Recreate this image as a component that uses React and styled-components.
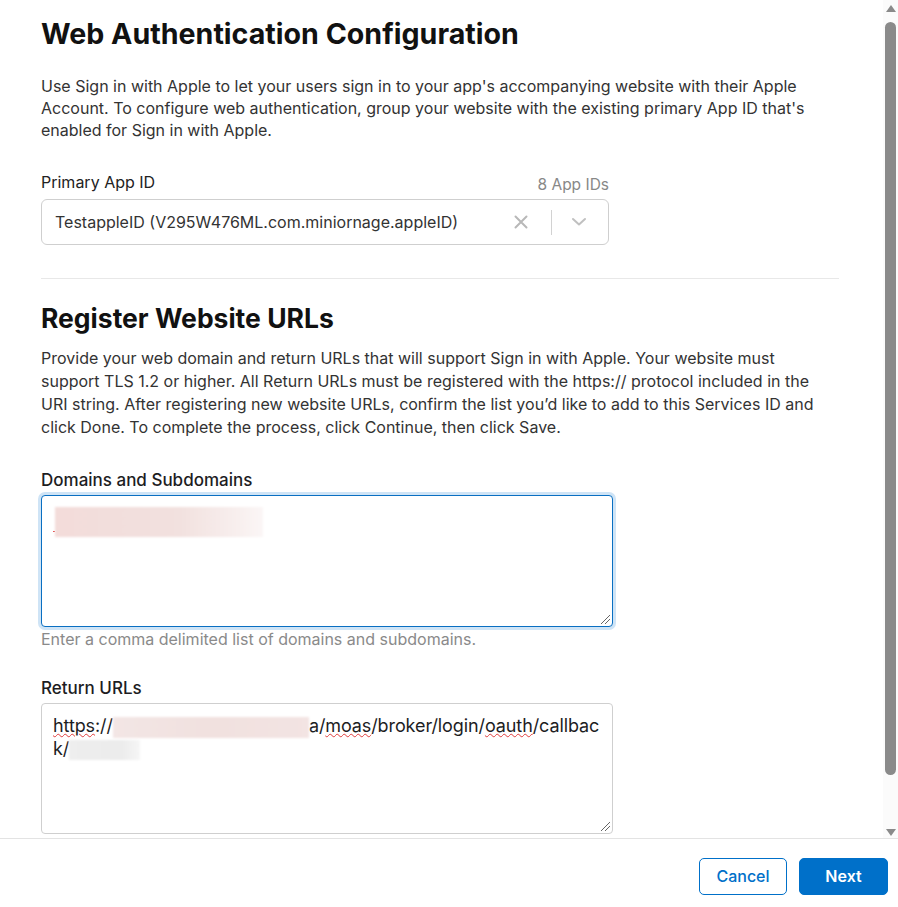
import styled, { createGlobalStyle } from "styled-components"

const GlobalStyle = createGlobalStyle`
    html, body {
        margin: 0;
        padding: 0;
        background: #fff;
    }
    body {
        font-family: Inter, "Noto Sans", "Liberation Sans", sans-serif;
        color: #1d1d1f;
        -webkit-font-smoothing: antialiased;
    }
`

export default function App() {
    return (
        <Page>
            <GlobalStyle />
            <Viewport>
                <Scroller>
                    <Content>
                        <Title>Web Authentication Configuration</Title>
                        <Text>
                            Use Sign in with Apple to let your users sign in to your app's accompanying website with their Apple<br />
                            Account. To configure web authentication, group your website with the existing primary App ID that's<br />
                            enabled for Sign in with Apple.
                        </Text>

                        <LabelRow>
                            <Label>Primary App ID</Label>
                            <Count>8 App IDs</Count>
                        </LabelRow>
                        <Select>
                            <SelectValue>TestappleID (V295W476ML.com.miniornage.appleID)</SelectValue>
                            <SelectIcon>
                                <svg width="14" height="14" viewBox="0 0 14 14">
                                    <path d="M1.5 1.5 L12.5 12.5 M12.5 1.5 L1.5 12.5" stroke="#b8b8b8" strokeWidth="2" strokeLinecap="round" />
                                </svg>
                            </SelectIcon>
                            <SelectSep />
                            <SelectIcon>
                                <svg width="16" height="10" viewBox="0 0 16 10">
                                    <path d="M2 2 L8 7.5 L14 2" stroke="#c0c0c0" strokeWidth="2" fill="none" strokeLinecap="round" strokeLinejoin="round" />
                                </svg>
                            </SelectIcon>
                        </Select>

                        <Divider />

                        <Heading>Register Website URLs</Heading>
                        <Text $lh={23}>
                            Provide your web domain and return URLs that will support Sign in with Apple. Your website must<br />
                            support TLS 1.2 or higher. All Return URLs must be registered with the https:// protocol included in the<br />
                            URI string. After registering new website URLs, confirm the list you’d like to add to this Services ID and<br />
                            click Done. To complete the process, click Continue, then click Save.
                        </Text>

                        <FieldLabel>Domains and Subdomains</FieldLabel>
                        <Area $focused $height={132} $width={572}>
                            <Line>
                                <Dot />
                                <Blur $w={208} $h={30} $fade />
                            </Line>
                            <Grip />
                        </Area>
                        <Hint>Enter a comma delimited list of domains and subdomains.</Hint>

                        <FieldLabel $top={29}>Return URLs</FieldLabel>
                        <Area $height={131} $width={572}>
                            <UrlText>
                                <Typo>https</Typo>://<Blur $w={196} $h={21} />a/<Typo>moas</Typo>/broker/login/<Typo>oauth</Typo>/callbac<br />
                                k/<Blur $w={71} $h={20} $grey />
                            </UrlText>
                            <Grip />
                        </Area>
                        <Spacer />
                    </Content>
                </Scroller>
                <Scrollbar>
                    <Arrow />
                    <Thumb />
                    <Arrow $down />
                </Scrollbar>
            </Viewport>
            <Footer>
                <Button>Cancel</Button>
                <Button $primary>Next</Button>
            </Footer>
        </Page>
    )
}

const Page = styled.div`
    width: 898px;
    height: 907px;
    display: flex;
    flex-direction: column;
    overflow: hidden;
`

const Viewport = styled.div`
    flex: none;
    height: 838px;
    display: flex;
    border-bottom: 1px solid #e3e3e3;
`

const Scroller = styled.div`
    flex: 1;
    overflow: hidden;
`

const Content = styled.div`
    padding: 17px 44px 0 41px;
    display: flex;
    flex-direction: column;
    align-items: flex-start;
`

const Title = styled.h1`
    margin: 0;
    font-size: 28.6px;
    line-height: 34px;
    font-weight: 700;
    color: #111;
`

const Heading = styled.h2`
    margin: 24px 0 0;
    font-size: 26.5px;
    line-height: 30px;
    font-weight: 700;
    color: #111;
`

const Text = styled.p`
    margin: ${p => p.$lh ? '14px' : '24px'} 0 0;
    font-size: 16px;
    line-height: ${p => p.$lh || 22}px;
    color: #333;
    white-space: nowrap;
`

const LabelRow = styled.div`
    margin-top: 31px;
    width: 568px;
    display: flex;
    justify-content: space-between;
    align-items: baseline;
`

const Label = styled.span`
    font-size: 16px;
    line-height: 20px;
    color: #222;
`

const Count = styled.span`
    font-size: 15.5px;
    line-height: 20px;
    color: #888;
    position: relative;
    top: 2px;
`

const Select = styled.div`
    margin-top: 6px;
    box-sizing: border-box;
    width: 568px;
    height: 46px;
    border: 1px solid #cfcfcf;
    border-radius: 6px;
    display: flex;
    align-items: center;
    padding: 0 18px 0 13px;
`

const SelectValue = styled.span`
    flex: 1;
    font-size: 16px;
    color: #333;
    white-space: nowrap;
`

const SelectIcon = styled.span`
    display: flex;
    align-items: center;
    justify-content: center;
    width: 22px;
`

const SelectSep = styled.span`
    width: 1px;
    height: 25px;
    background: #d2d2d2;
    margin: 0 16px 0 19px;
`

const Divider = styled.hr`
    margin: 33px 0 0;
    width: 798px;
    border: none;
    border-top: 1px solid #e8e8e8;
`

const FieldLabel = styled.label`
    margin-top: ${p => p.$top || 31}px;
    font-size: 17px;
    line-height: 20px;
    font-weight: 500;
    color: #1d1d1f;
`

const Area = styled.div`
    position: relative;
    margin-top: 5px;
    box-sizing: border-box;
    width: ${p => p.$width}px;
    height: ${p => p.$height}px;
    border: 1px solid ${p => p.$focused ? '#0a6fc2' : '#cfcfcf'};
    border-radius: 4px;
    box-shadow: ${p => p.$focused ? '0 0 0 3px #cfe4f6' : 'none'};
    padding: 11px 11px;
    background: #fff;
`

const Line = styled.div`
    display: flex;
    align-items: center;
`

const Dot = styled.span`
    width: 2px;
    height: 1px;
    background: #e24a4a;
    margin-top: 18px;
`

const Blur = styled.span`
    display: inline-block;
    vertical-align: middle;
    width: ${p => p.$w}px;
    height: ${p => p.$h}px;
    background: ${p => p.$grey
        ? 'linear-gradient(90deg, #eeeeee 0%, #ececec 75%, #f6f6f6 100%)'
        : p.$fade
            ? 'linear-gradient(90deg, #f3dcda 0%, #f2e1df 60%, #f8efee 88%, #fbf6f6 100%)'
            : 'linear-gradient(90deg, #f3e6e5 0%, #f1e1df 50%, #f3e4e3 100%)'};
    filter: blur(1px);
`

const UrlText = styled.div`
    font-size: 18px;
    line-height: 22px;
    color: #1d1d1f;
    white-space: nowrap;
    letter-spacing: -0.1px;
`

const Typo = styled.span`
    text-decoration: underline wavy #e03c3c;
    text-decoration-thickness: 1px;
    text-underline-offset: 1px;
`

const Grip = styled.span`
    position: absolute;
    right: 2px;
    bottom: 2px;
    width: 9px;
    height: 9px;
    background:
        linear-gradient(135deg, transparent 45%, #666 45%, #666 55%, transparent 55%) no-repeat,
        linear-gradient(135deg, transparent 45%, #666 45%, #666 58%, transparent 58%) no-repeat;
    background-size: 9px 9px, 5px 5px;
    background-position: 0 0, 4px 4px;
`

const Hint = styled.div`
    margin-top: 2px;
    font-size: 16px;
    line-height: 20px;
    color: #8a8a8a;
`

const Spacer = styled.div`
    height: 200px;
`

const Scrollbar = styled.div`
    flex: none;
    width: 15px;
    background: #fbfbfb;
    display: flex;
    flex-direction: column;
    align-items: center;
    padding: 5px 0 2px;
    box-sizing: border-box;
`

const Arrow = styled.span`
    width: 0;
    height: 0;
    border-left: 5.5px solid transparent;
    border-right: 5.5px solid transparent;
    ${p => p.$down
        ? 'border-top: 7px solid #8a8a8a; margin-top: auto;'
        : 'border-bottom: 7px solid #8a8a8a;'}
`

const Thumb = styled.span`
    margin-top: 10px;
    width: 11px;
    height: 753px;
    border-radius: 6px;
    background: #8a8a8a;
`

const Button = styled.button`
    box-sizing: border-box;
    height: 37px;
    width: ${p => p.$primary ? 89 : 88}px;
    border-radius: 5px;
    border: 1px solid #0070c9;
    background: ${p => p.$primary ? '#0070c9' : '#fff'};
    color: ${p => p.$primary ? '#fff' : '#0070c9'};
    font: ${p => p.$primary ? 600 : 500} 16px Inter, "Liberation Sans", sans-serif;
    padding: 0 0 2px;
    cursor: pointer;
`

const Footer = styled.div`
    display: flex;
    justify-content: flex-end;
    gap: 12px;
    padding: 19px 10px 0 0;
`
